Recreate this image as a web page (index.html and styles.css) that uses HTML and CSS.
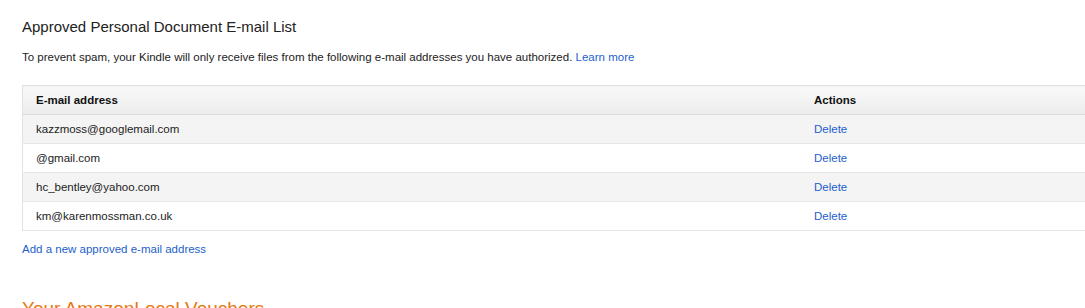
FILE: index.html
```html
<!DOCTYPE html>
<html lang="en">
<head>
<meta charset="UTF-8" />
<title>Personal Document Settings</title>
<link rel="stylesheet" href="styles.css">
</head>
<body>

<div class="page">
  <h2 class="title">Approved Personal Document E-mail List</h2>
  <p class="intro">To prevent spam, your Kindle will only receive files from the following e-mail addresses you have authorized. <a href="#">Learn more</a></p>

  <table class="emails">
    <thead>
      <tr>
        <th class="col-mail">E-mail address</th>
        <th>Actions</th>
      </tr>
    </thead>
    <tbody>
      <tr><td>kazzmoss@googlemail.com</td><td><a href="#">Delete</a></td></tr>
      <tr><td>@gmail.com</td><td><a href="#">Delete</a></td></tr>
      <tr><td>hc_bentley@yahoo.com</td><td><a href="#">Delete</a></td></tr>
      <tr><td>km@karenmossman.co.uk</td><td><a href="#">Delete</a></td></tr>
    </tbody>
  </table>

  <a class="add" href="#">Add a new approved e-mail address</a>

  <h2 class="vouchers">Your AmazonLocal Vouchers</h2>
</div>

</body>
</html>
```

FILE: styles.css
```css
body {
  margin: 0;
  font-family: "Liberation Sans", Arial, sans-serif;
  color: #111;
  background: #fff;
  overflow: hidden;
}
a {
  color: #1d5fcc;
  text-decoration: none;
}
.page {
  padding: 18px 0 0 22px;
}
.title {
  font-size: 15px;
  font-weight: normal;
  margin: 0;
  color: #222;
}
.intro {
  font-size: 11.5px;
  margin: 16px 0 0;
  color: #222;
}
.emails {
  margin-top: 22px;
  width: 1090px;
  border-collapse: collapse;
  font-size: 11.5px;
  border: 1px solid #e2e2e2;
}
.emails th {
  text-align: left;
  font-weight: bold;
  height: 28px;
  padding: 0 13px;
  background: linear-gradient(#f9f9f9, #ececec);
  border-bottom: 1px solid #dcdcdc;
  color: #111;
}
.emails .col-mail {
  width: 752px;
}
.emails td {
  height: 28px;
  padding: 0 13px;
  border-bottom: 1px solid #e6e6e6;
  color: #222;
}
.emails tbody tr:nth-child(odd) td {
  background: #f4f4f4;
}
.add {
  display: block;
  font-size: 11.5px;
  margin-top: 12px;
}
.vouchers {
  font-size: 19px;
  font-weight: normal;
  color: #e47911;
  margin: 43px 0 0;
}
```
